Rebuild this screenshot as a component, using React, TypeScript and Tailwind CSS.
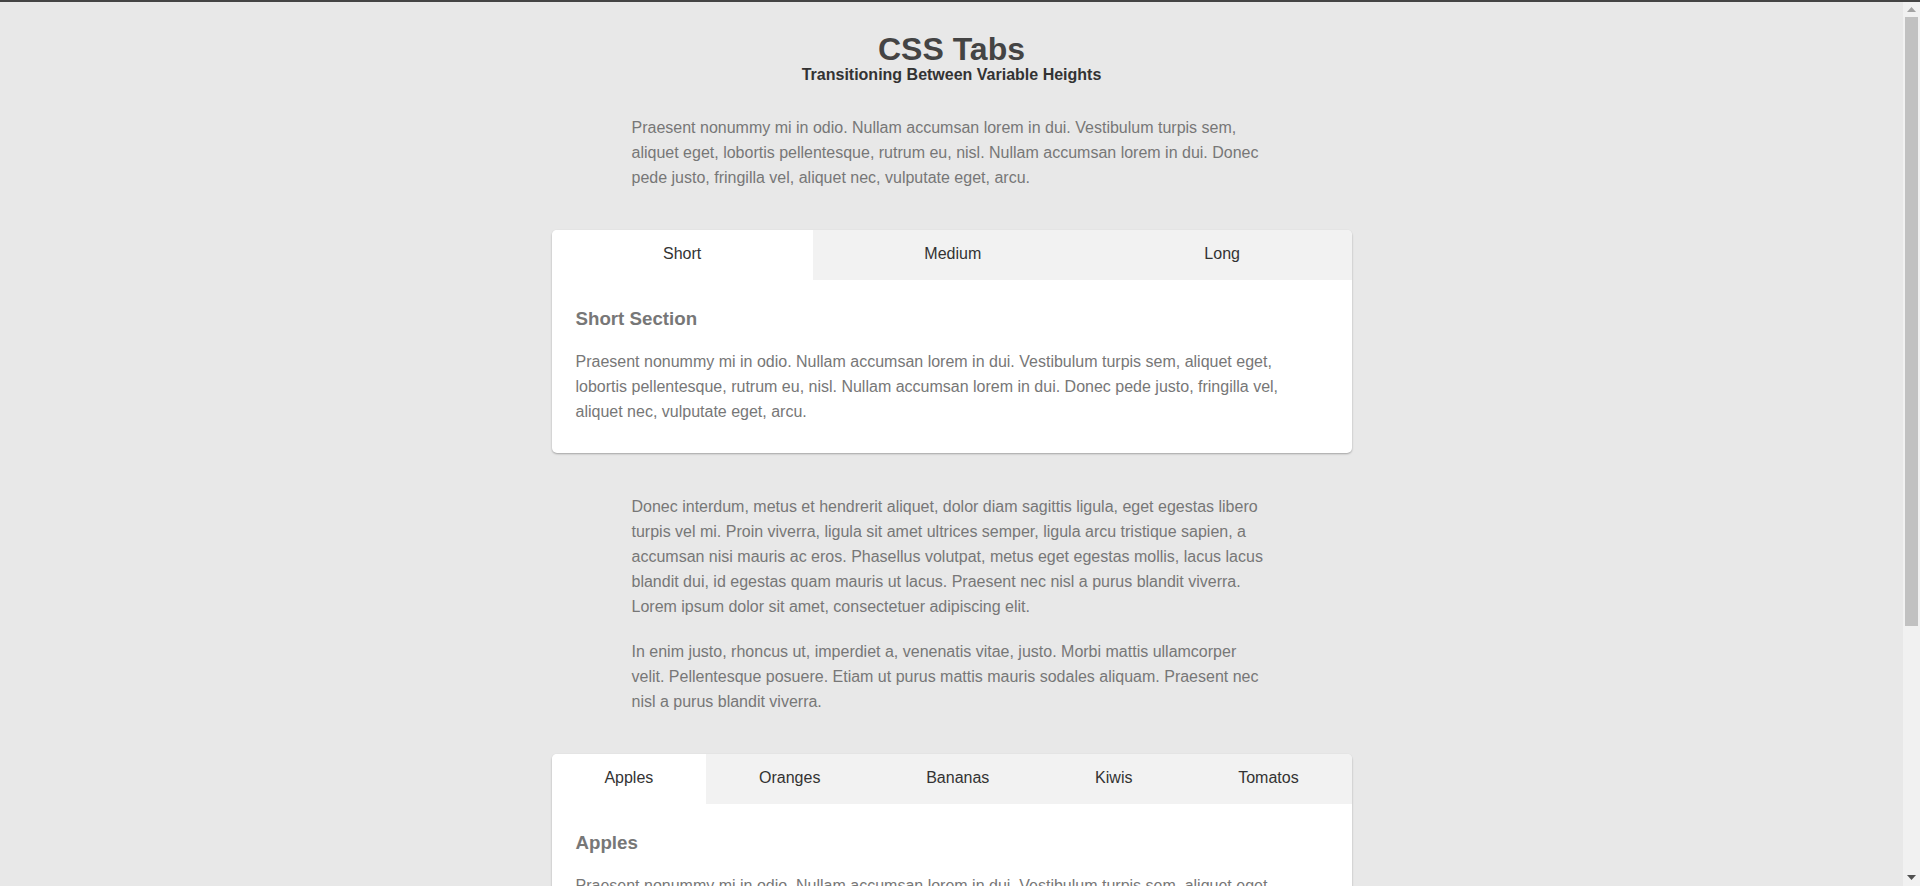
import { useState } from 'react';

type Tab = { label: string; title: string; body: string[] };

const lorem =
  'Praesent nonummy mi in odio. Nullam accumsan lorem in dui. Vestibulum turpis sem, aliquet eget, lobortis pellentesque, rutrum eu, nisl. Nullam accumsan lorem in dui. Donec pede justo, fringilla vel, aliquet nec, vulputate eget, arcu.';

const longer =
  'Donec interdum, metus et hendrerit aliquet, dolor diam sagittis ligula, eget egestas libero turpis vel mi. Proin viverra, ligula sit amet ultrices semper, ligula arcu tristique sapien, a accumsan nisi mauris ac eros. Phasellus volutpat, metus eget egestas mollis, lacus lacus blandit dui, id egestas quam mauris ut lacus. Praesent nec nisl a purus blandit viverra. Lorem ipsum dolor sit amet, consectetuer adipiscing elit.';

const inEnim =
  'In enim justo, rhoncus ut, imperdiet a, venenatis vitae, justo. Morbi mattis ullamcorper velit. Pellentesque posuere. Etiam ut purus mattis mauris sodales aliquam. Praesent nec nisl a purus blandit viverra.';

const sizeTabs: Tab[] = [
  { label: 'Short', title: 'Short Section', body: [lorem] },
  { label: 'Medium', title: 'Medium Section', body: [lorem, inEnim] },
  { label: 'Long', title: 'Long Section', body: [lorem, longer, inEnim] },
];

const fruitTabs: Tab[] = [
  { label: 'Apples', title: 'Apples', body: [lorem] },
  { label: 'Oranges', title: 'Oranges', body: [inEnim] },
  { label: 'Bananas', title: 'Bananas', body: [longer] },
  { label: 'Kiwis', title: 'Kiwis', body: [lorem, inEnim] },
  { label: 'Tomatos', title: 'Tomatos', body: [longer, lorem] },
];

function Tabs({ tabs, className }: { tabs: Tab[]; className: string }) {
  const [ativo, setAtivo] = useState(0);
  const atual = tabs[ativo];

  return (
    <div
      className={
        'mx-auto w-[800px] overflow-hidden rounded-[5px] bg-white shadow-[0_1px_2px_rgba(0,0,0,0.3)] ' + className
      }
    >
      <div className="flex bg-[#f2f2f2]">
        {tabs.map((t, i) => (
          <button
            key={t.label}
            type="button"
            onClick={() => setAtivo(i)}
            className={
              'flex-auto pb-[16px] pt-[14px] text-center text-[16px] leading-[20px] text-[#333] ' +
              (i === ativo ? 'bg-white' : 'bg-[#f2f2f2]')
            }
          >
            {t.label}
          </button>
        ))}
      </div>
      <div className="px-[24px] pb-[29px] pt-[24px]">
        <h3 className="mb-[15px] text-[18.72px] font-bold leading-[30px] text-[#777]">{atual.title}</h3>
        {atual.body.map((p, i) => (
          <p key={i} className={'text-[16px] leading-[25px] text-[#777] ' + (i > 0 ? 'mt-[20px]' : '')}>
            {p}
          </p>
        ))}
      </div>
    </div>
  );
}

// barra de rolagem desenhada por cima, igual à da captura
function Scrollbar() {
  return (
    <div className="fixed bottom-0 right-0 top-[2px] flex w-[17px] flex-col bg-[#f1f1f1]">
      <div className="flex h-[15px] items-center justify-center">
        <svg width="9" height="5" viewBox="0 0 9 5">
          <path d="M4.5 0 L9 5 L0 5 Z" fill="#a3a3a3" />
        </svg>
      </div>
      <div className="mx-auto h-[609px] w-[13px] bg-[#c1c1c1]" />
      <div className="flex-1" />
      <div className="flex h-[17px] items-center justify-center">
        <svg width="9" height="5" viewBox="0 0 9 5">
          <path d="M0 0 L9 0 L4.5 5 Z" fill="#505050" />
        </svg>
      </div>
    </div>
  );
}

export default function App() {
  return (
    <div className="min-h-screen border-t-2 border-[#444] bg-[#e8e8e8] font-['Liberation_Sans',Arial,sans-serif]">
      <main className="mr-[17px] pb-[140px]">
        <header className="pt-[31px] text-center">
          <h1 className="text-[32px] font-bold leading-[32px] text-[#444]">CSS Tabs</h1>
          <h2 className="text-[16px] font-bold leading-[20px] text-[#333]">Transitioning Between Variable Heights</h2>
        </header>

        <p className="mx-auto mt-[30px] w-[640px] text-[16px] leading-[25px] text-[#777]">{lorem}</p>

        <Tabs tabs={sizeTabs} className="mt-[40px]" />

        <div className="mx-auto mt-[41px] flex w-[640px] flex-col gap-[20px] text-[16px] leading-[25px] text-[#777]">
          <p>{longer}</p>
          <p>{inEnim}</p>
        </div>

        <Tabs tabs={fruitTabs} className="mt-[40px]" />

        <p className="mx-auto mt-[40px] w-[640px] text-[16px] leading-[25px] text-[#777]">{inEnim}</p>
      </main>
      <Scrollbar />
    </div>
  );
}
